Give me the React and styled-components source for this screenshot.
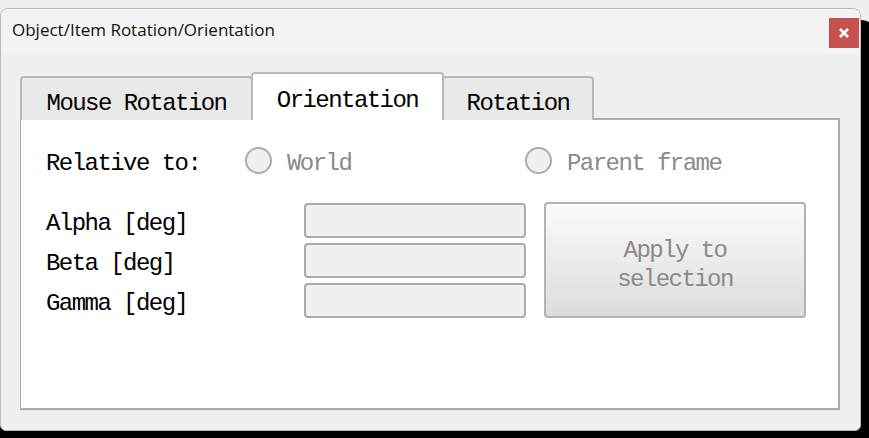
import React from "react";
import styled, { createGlobalStyle } from "styled-components";

const GlobalStyle = createGlobalStyle`
    html, body {
        margin: 0;
        background: #f0f0f0;
    }
    * {
        box-sizing: border-box;
    }
`;

const mono = `"Liberation Mono", "Courier New", monospace`;

const Screen = styled.div`
    width: 869px;
    height: 438px;
    padding-top: 8px;
    overflow: hidden;
    background: #efefef;
`;

const Window = styled.div`
    width: 861px;
    height: 423px;
    border: 1px solid #bababa;
    border-radius: 8px 8px 6px 6px;
    background: #f0f0f0;
    box-shadow: 8px 20px 0 8px #000;
    display: flex;
    flex-direction: column;
    overflow: hidden;
`;

const TitleBar = styled.div`
    height: 44px;
    flex-shrink: 0;
    background: #f4f4f4;
    display: flex;
    justify-content: space-between;
    align-items: flex-start;
    padding-left: 11px;
    padding-right: 1px;
`;

const Title = styled.div`
    margin-top: 9px;
    font-family: "Open Sans", "Noto Sans", sans-serif;
    font-size: 17px;
    color: #111;
`;

const CloseButton = styled.button`
    margin-top: 9px;
    width: 30px;
    height: 30px;
    border: none;
    padding: 0;
    background: #c75050;
    display: flex;
    align-items: center;
    justify-content: center;
`;

const Body = styled.div`
    padding: 20px 20px 0 19px;
`;

const TabRow = styled.div`
    display: flex;
    align-items: flex-end;
    height: 47px;
    margin-bottom: -2px;
`;

const Tab = styled.div`
    position: relative;
    width: ${(p) => p.$width}px;
    height: ${(p) => (p.$active ? 48 : 44)}px;
    margin: 0 ${(p) => (p.$active ? -2 : 0)}px;
    z-index: ${(p) => (p.$active ? 1 : 0)};
    background: ${(p) => (p.$active ? "#fff" : "#e9e9e9")};
    border: 2px solid #b9b9b9;
    border-bottom: none;
    border-radius: 4px 4px 0 0;
    display: flex;
    justify-content: center;
    align-items: center;
    padding-top: ${(p) => (p.$active ? 6 : 9)}px;
    font-family: ${mono};
    font-size: 24px;
    letter-spacing: -1.55px;
    color: #000;
`;

const Panel = styled.div`
    height: 292px;
    background: #fff;
    border-style: solid;
    border-color: #adadad;
    border-width: 2px 2px 2px 1px;
    box-shadow: 0 1px 0 #e2e2e2;
    padding: 27px 24px 0 25px;
    font-family: ${mono};
    font-size: 24px;
    letter-spacing: -1.55px;
`;

const RadioRow = styled.div`
    display: flex;
    align-items: center;
    height: 27px;
`;

const Label = styled.div`
    width: ${(p) => p.$width}px;
    flex-shrink: 0;
    padding-top: 5px;
    color: #000;
    white-space: pre;
`;

const RadioOption = styled.label`
    width: 280px;
    display: flex;
    align-items: center;
    gap: 15px;
    color: #8a8a8a;
`;

const RadioText = styled.span`
    padding-top: 5px;
`;

const RadioCircle = styled.span`
    width: 27px;
    height: 27px;
    border-radius: 50%;
    border: 2px solid #ababab;
    background: #f0f0f0;
`;

const ParamArea = styled.div`
    display: flex;
    margin-top: 28px;
`;

const FieldColumn = styled.div`
    display: flex;
    flex-direction: column;
    gap: 5px;
    padding-top: 1px;
`;

const FieldRow = styled.div`
    display: flex;
    align-items: center;
    height: 35px;
`;

const Field = styled.input`
    width: 222px;
    height: 35px;
    background: #f0f0f0;
    border: 2px solid #ababab;
    border-radius: 4px;
    outline: none;
`;

const ApplyButton = styled.button`
    margin-left: 18px;
    width: 262px;
    height: 116px;
    border: 2px solid #b3b3b3;
    border-radius: 4px;
    background: linear-gradient(#fbfbfb, #dcdcdc);
    color: #8a8a8a;
    font-family: ${mono};
    font-size: 24px;
    letter-spacing: -1.55px;
    line-height: 29px;
    padding: 9px 0 0;
`;

const tabs = [
    { name: "Mouse Rotation", width: 233 },
    { name: "Orientation", width: 193, active: true },
    { name: "Rotation", width: 152 },
];

const fields = ["Alpha [deg]", "Beta [deg]", "Gamma [deg]"];

const App = () => {
    return (
        <Screen>
            <GlobalStyle />
            <Window>
                <TitleBar>
                    <Title>Object/Item Rotation/Orientation</Title>
                    <CloseButton aria-label="Close">
                        <svg width="10" height="10" viewBox="0 0 10 10">
                            <path d="M1 1 L9 9 M9 1 L1 9" stroke="#fff" strokeWidth="2.6" />
                        </svg>
                    </CloseButton>
                </TitleBar>
                <Body>
                    <TabRow>
                        {tabs.map((t) => (
                            <Tab key={t.name} $width={t.width} $active={t.active}>
                                {t.name}
                            </Tab>
                        ))}
                    </TabRow>
                    <Panel>
                        <RadioRow>
                            <Label $width={199}>Relative to:</Label>
                            <RadioOption>
                                <RadioCircle />
                                <RadioText>World</RadioText>
                            </RadioOption>
                            <RadioOption>
                                <RadioCircle />
                                <RadioText>Parent frame</RadioText>
                            </RadioOption>
                        </RadioRow>
                        <ParamArea>
                            <FieldColumn>
                                {fields.map((f) => (
                                    <FieldRow key={f}>
                                        <Label $width={258}>{f}</Label>
                                        <Field readOnly />
                                    </FieldRow>
                                ))}
                            </FieldColumn>
                            <ApplyButton>
                                Apply to
                                <br />
                                selection
                            </ApplyButton>
                        </ParamArea>
                    </Panel>
                </Body>
            </Window>
        </Screen>
    );
};

export default App;
